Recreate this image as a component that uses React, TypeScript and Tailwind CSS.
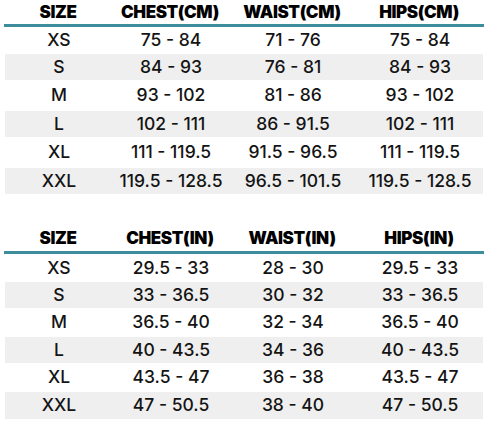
import * as React from "react"

type Table = {
  headers: string[]
  rows: string[][]
  rowHeights: string[]
}

const cm: Table = {
  headers: ["SIZE", "CHEST(CM)", "WAIST(CM)", "HIPS(CM)"],
  rows: [
    ["XS", "75 - 84", "71 - 76", "75 - 84"],
    ["S", "84 - 93", "76 - 81", "84 - 93"],
    ["M", "93 - 102", "81 - 86", "93 - 102"],
    ["L", "102 - 111", "86 - 91.5", "102 - 111"],
    ["XL", "111 - 119.5", "91.5 - 96.5", "111 - 119.5"],
    ["XXL", "119.5 - 128.5", "96.5 - 101.5", "119.5 - 128.5"],
  ],
  rowHeights: ["h-[27px]", "h-[26px]", "h-[31px]", "h-[26px]", "h-[31px]", "h-[26px]"],
}

const inches: Table = {
  headers: ["SIZE", "CHEST(IN)", "WAIST(IN)", "HIPS(IN)"],
  rows: [
    ["XS", "29.5 - 33", "28 - 30", "29.5 - 33"],
    ["S", "33 - 36.5", "30 - 32", "33 - 36.5"],
    ["M", "36.5 - 40", "32 - 34", "36.5 - 40"],
    ["L", "40 - 43.5", "34 - 36", "40 - 43.5"],
    ["XL", "43.5 - 47", "36 - 38", "43.5 - 47"],
    ["XXL", "47 - 50.5", "38 - 40", "47 - 50.5"],
  ],
  rowHeights: ["h-[28px]", "h-[26px]", "h-[29px]", "h-[26px]", "h-[29px]", "h-[27px]"],
}

const cols = "grid grid-cols-[108px_116px_128px_126px]"

function SizeTable({ table, headerClass }: { table: Table; headerClass: string }) {
  return (
    <div className="px-[5px]">
      <div className={`${cols} ${headerClass} items-center border-b-[3px] border-[#3d8d9c] -mx-px`}>
        {table.headers.map((h) => (
          <div key={h} className="text-center text-[17px] font-black tracking-[-0.4px] text-black">
            {h}
          </div>
        ))}
      </div>
      {table.rows.map((row, i) => (
        <div
          key={row[0]}
          className={`${cols} ${table.rowHeights[i]} items-center ${i % 2 === 1 ? "bg-[#efefef]" : ""}`}
        >
          {row.map((cell, j) => (
            <div key={j} className="text-center text-[17.5px] font-medium text-[#141414]">
              {cell}
            </div>
          ))}
        </div>
      ))}
    </div>
  )
}

export default function App() {
  return (
    <div className="w-[488px] h-[421px] bg-white overflow-hidden font-['Inter',sans-serif]">
      <SizeTable table={cm} headerClass="h-[27px]" />
      <div className="h-[32px]" />
      <SizeTable table={inches} headerClass="h-[28px]" />
    </div>
  )
}
